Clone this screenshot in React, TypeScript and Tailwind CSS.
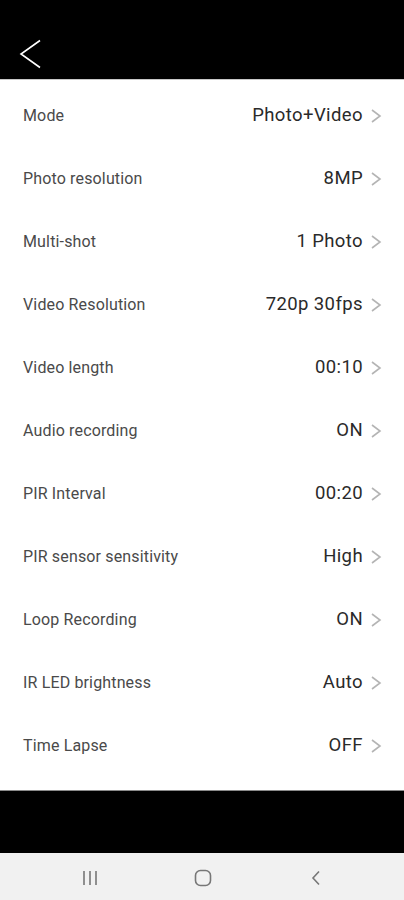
import React from "react";

const rows: [string, string][] = [
  ["Mode", "Photo+Video"],
  ["Photo resolution", "8MP"],
  ["Multi-shot", "1 Photo"],
  ["Video Resolution", "720p 30fps"],
  ["Video length", "00:10"],
  ["Audio recording", "ON"],
  ["PIR Interval", "00:20"],
  ["PIR sensor sensitivity", "High"],
  ["Loop Recording", "ON"],
  ["IR LED brightness", "Auto"],
  ["Time Lapse", "OFF"],
];

function Chevron() {
  return (
    <svg width="12" height="16" viewBox="0 0 12 16" className="ml-[7px]">
      <path d="M2 2 L10 8 L2 14" fill="none" stroke="#b4b4b4" strokeWidth="1.6" />
    </svg>
  );
}

export default function App() {
  return (
    <div className="w-[404px] h-[900px] flex flex-col bg-white" style={{ fontFamily: "Roboto, 'Liberation Sans', sans-serif" }}>
      <div className="h-[80px] bg-black flex items-center border-b border-[#c8c8c8]">
        <svg width="24" height="32" viewBox="0 0 24 32" className="ml-[19px] mt-[30px]">
          <path d="M21 1.5 L2 15 L21 28.5" fill="none" stroke="#fff" strokeWidth="1.6" />
        </svg>
      </div>
      <div className="flex-1 flex flex-col pt-[4px]">
        {rows.map(([l, v]) => (
          <div key={l} className="h-[63px] flex items-center justify-between pl-[23px] pr-[22px]">
            <span className="text-[16px] text-[#4a4a4a] tracking-[0.15px]">{l}</span>
            <span className="flex items-center text-[18.5px] text-[#2a2a2a] tracking-[0.4px]">
              {v}
              <Chevron />
            </span>
          </div>
        ))}
      </div>
      <div className="h-[63px] bg-black border-t border-[#8a8a8a]" />
      <div className="h-[47px] bg-[#f1f1f1] flex items-center">
        <div className="w-[404px] relative h-full">
          <svg width="16" height="16" viewBox="0 0 16 16" className="absolute left-[82px] top-[17px]">
            <path d="M2 1 V15 M8 1 V15 M14 1 V15" stroke="#777" strokeWidth="1.6" />
          </svg>
          <svg width="18" height="18" viewBox="0 0 18 18" className="absolute left-[194px] top-[16px]">
            <rect x="1.5" y="1.5" width="15" height="15" rx="5" fill="none" stroke="#777" strokeWidth="1.6" />
          </svg>
          <svg width="10" height="16" viewBox="0 0 10 16" className="absolute left-[311px] top-[17px]">
            <path d="M8 1.5 L2 8 L8 14.5" fill="none" stroke="#777" strokeWidth="1.6" />
          </svg>
        </div>
      </div>
    </div>
  );
}
